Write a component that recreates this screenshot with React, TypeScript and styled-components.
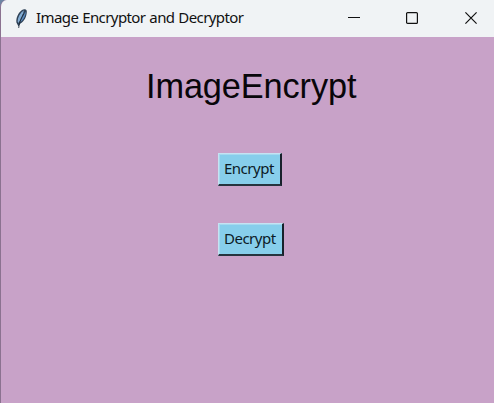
import React from "react";
import styled, { createGlobalStyle } from "styled-components";

const GlobalStyle = createGlobalStyle`
  * { box-sizing: border-box; }
  html, body { margin: 0; padding: 0; overflow: hidden; background: #6d85a3; }
`;

const Window = styled.div`
  display: flex;
  flex-direction: column;
  width: 494px;
  height: 403px;
  border-left: 1px solid #8b7290;
  border-top-left-radius: 7px;
  background: #c8a2c8;
  overflow: hidden;
`;

const TitleBar = styled.header`
  display: flex;
  align-items: center;
  flex: 0 0 37px;
  padding-left: 13px;
  background: #f0f3f5;
`;

const Title = styled.span`
  flex: 1;
  margin: -3px 0 0 6px;
  font: 15px/20px "Noto Sans", "Open Sans", sans-serif;
  letter-spacing: -0.58px;
  word-spacing: 0.5px;
  white-space: nowrap;
  color: #111;
`;

const Controls = styled.div`
  display: flex;
  height: 37px;
  margin-right: -7px;
`;

const ControlButton = styled.button<{ $width: number }>`
  display: flex;
  align-items: center;
  justify-content: center;
  width: ${(p) => p.$width}px;
  padding: 0 0 1px;
  border: 0;
  background: transparent;
`;

const Content = styled.main`
  display: flex;
  flex: 1;
  flex-direction: column;
  align-items: flex-start;
  padding-left: 217px;
`;

const Heading = styled.h1`
  margin: 29px 0 0 -72px;
  font: 400 34.3px/40px "Liberation Sans", Arial, sans-serif;
  letter-spacing: -0.1px;
  white-space: nowrap;
  color: #08060a;
`;

const ActionButton = styled.button<{ $width: number; $gap: number }>`
  width: ${(p) => p.$width}px;
  height: 33px;
  margin-top: ${(p) => p.$gap}px;
  padding: 0 0 2px 5px;
  border: solid;
  border-width: 1px 2px 2px 1px;
  border-color: #c5e3f2 #17212b #26343f #c5e3f2;
  box-shadow: inset 1px 1px 0 #a5d9ef;
  background: #87ceeb;
  color: #0c1a26;
  font: 15px/20px "Noto Sans", "Open Sans", sans-serif;
  letter-spacing: -0.5px;
  text-align: left;
  white-space: nowrap;
`;

const Feather = () => (
  <svg width="16" height="22" viewBox="0 0 16 22">
    <path d="M4.5 18.5 2.4 14.5C1.9 10 4 5 8 2 10 .8 12.7 1.3 12.8 3.3 13 8 10.4 13.5 6.2 15.7Z" fill="#304358" />
    <path d="M3.6 13.5C3.8 9 6 5 9.9 2.3 9.4 6 6.7 11 4.6 15Z" fill="#82acd3" />
    <path d="M6 14.3C9.2 12.5 11.5 8.5 11.9 3.6 9.5 7.5 7.4 11 6 14.3Z" fill="#5b8abd" />
    <path d="M9.5 6C8 9 5.5 13 4.7 20" stroke="#172433" strokeWidth=".8" fill="none" />
  </svg>
);

export default function App() {
  return (
    <>
      <GlobalStyle />
      <Window>
        <TitleBar>
          <Feather />
          <Title>Image Encryptor and Decryptor</Title>
          <Controls>
            <ControlButton $width={58} aria-label="Minimize">
              <svg width="12" height="12"><path d="M0 5.5H12" stroke="#111" /></svg>
            </ControlButton>
            <ControlButton $width={58} aria-label="Maximize">
              <svg width="12" height="12"><rect x=".6" y=".6" width="10.8" height="10.8" rx="1" fill="none" stroke="#111" strokeWidth="1.2" /></svg>
            </ControlButton>
            <ControlButton $width={60} aria-label="Close">
              <svg width="12" height="12"><path d="M.4.4 11.6 11.6M11.6.4.4 11.6" stroke="#111" strokeWidth="1.2" /></svg>
            </ControlButton>
          </Controls>
        </TitleBar>
        <Content>
          <Heading>ImageEncrypt</Heading>
          <ActionButton $width={64} $gap={47}>Encrypt</ActionButton>
          <ActionButton $width={66} $gap={37}>Decrypt</ActionButton>
        </Content>
      </Window>
    </>
  );
}
